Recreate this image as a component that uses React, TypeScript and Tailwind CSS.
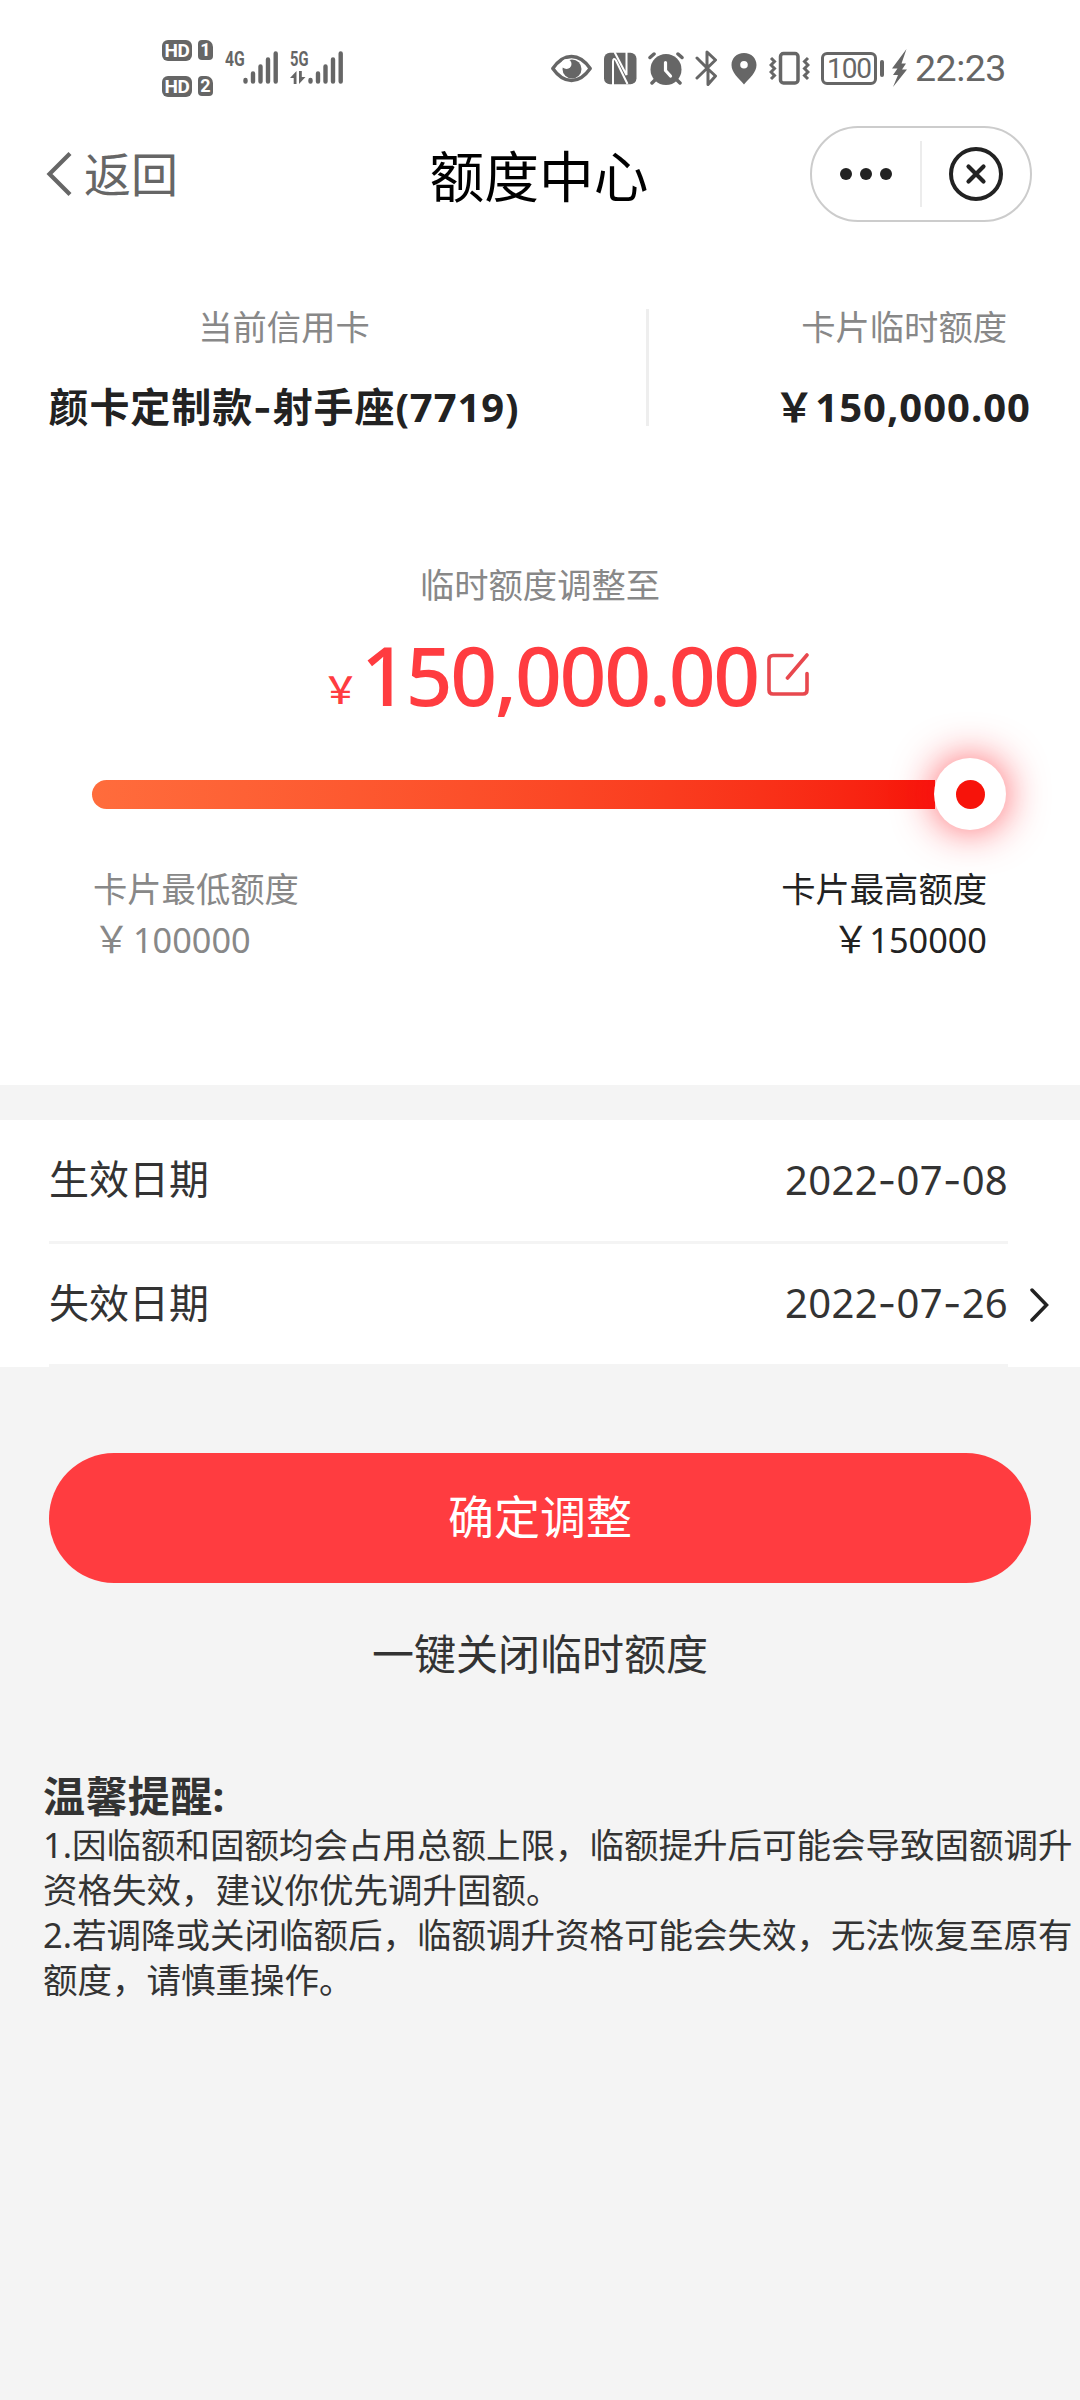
import { Fragment } from "react";

const dates = [
  { label: "生效日期", value: "2022-07-08", editable: false },
  { label: "失效日期", value: "2022-07-26", editable: true },
];

const notices = [
  "1.因临额和固额均会占用总额上限，临额提升后可能会导致固额调升资格失效，建议你优先调升固额。",
  "2.若调降或关闭临额后，临额调升资格可能会失效，无法恢复至原有额度，请慎重操作。",
];

const HdBadge = ({ sim }: { sim: string }) => (
  <div className="flex gap-[6px]">
    <span className="flex h-[21px] w-[30px] items-center justify-center rounded-[6px] bg-[#666] font-['Roboto'] text-[19px] leading-none font-bold tracking-[-0.5px] text-white">
      HD
    </span>
    <span className="flex h-[20px] w-[15px] items-center justify-center rounded-[4px] rounded-tr-[7px] bg-[#666] font-['Roboto'] text-[18px] leading-none font-bold text-white">
      {sim}
    </span>
  </div>
);

const SignalBars = () => (
  <svg width="36" height="36" viewBox="0 0 36 36" stroke="#666" strokeWidth="4.4" strokeLinecap="round">
    <path d="M2.5 30v1.6M10 23.5v8.1M17.5 16.5v15.1M25 9.5v22.1M32.7 3.5v28.1" />
  </svg>
);

const StatusBar = () => (
  <div className="flex h-[120px] items-center pt-[16px] pl-[162px] text-[#666]">
    <div className="flex flex-col gap-[15px]">
      <HdBadge sim="1" />
      <HdBadge sim="2" />
    </div>
    <div className="ml-[12px] flex h-[36px] w-[18px] items-start">
      <span className="origin-left scale-x-[0.75] font-['Roboto'] text-[21px] leading-[18px] font-bold">4G</span>
    </div>
    <SignalBars />
    <div className="ml-[11px] flex h-[36px] w-[18px] flex-col">
      <span className="origin-left scale-x-[0.7] font-['Roboto'] text-[21px] leading-[18px] font-bold">5G</span>
      <svg className="mt-[3px]" width="16" height="13" viewBox="0 0 16 13">
        <path d="M6.500 13V0L0 7h3.700v6zM9 0v13l6.500-7h-3.700V0z" fill="#666" />
      </svg>
    </div>
    <SignalBars />

    {/* eye */}
    <svg className="ml-[207px]" width="41" height="36" viewBox="0 0 41 36">
      <path
        d="M1.800 18.500C7 11 13 6.500 20.500 6.500S34 11 39.200 18.500C34 26 28 30.500 20.500 30.500S7 26 1.800 18.500z"
        fill="none"
        stroke="#666"
        strokeWidth="3.400"
        strokeLinejoin="round"
      />
      <circle cx="21" cy="19" r="9.500" fill="#666" />
      <circle cx="15.500" cy="14" r="5" fill="#fff" />
    </svg>
    {/* nfc */}
    <svg className="ml-[12px]" width="33" height="36" viewBox="0 0 33 36">
      <rect y="2.700" width="32.500" height="31.600" rx="6" fill="#666" />
      <path d="M9 35V11.500c0-3 1.500-3.500 3-1L23.500 34M10.500 2 22.500 25V2" fill="none" stroke="#fff" strokeWidth="2" />
    </svg>
    {/* alarm */}
    <svg className="ml-[11px]" width="36" height="36" viewBox="0 0 36 36" fill="none" strokeLinecap="round">
      <circle cx="18" cy="19.500" r="15.500" fill="#666" />
      <path d="M2 7.500 6 4M34 7.500 30 4M7 30l-3 3M29 30l3 3" stroke="#666" strokeWidth="3.500" />
      <path d="M17.500 12.500v8l5 5.500" stroke="#fff" strokeWidth="3.200" />
    </svg>
    {/* bluetooth */}
    <svg className="ml-[11px]" width="23" height="38" viewBox="0 0 23 38" fill="none" stroke="#666" strokeWidth="3" strokeLinecap="round" strokeLinejoin="round">
      <path d="M2 9l9.500 9.500M2 29 20.500 11 12 3v15.500M13 21v14.500l7.500-8.500L13 20" />
    </svg>
    {/* location */}
    <svg className="ml-[13px]" width="26" height="36" viewBox="0 0 26 36">
      <path
        fillRule="evenodd"
        fill="#666"
        d="M13 3C5.500 3 .5 8.500.5 15c0 7.500 7 13 12.500 19.500C18.500 28 25.500 22.500 25.500 15 25.500 8.500 20.500 3 13 3zm0 8a3.800 3.800 0 1 1 0 7.600 3.800 3.800 0 0 1 0-7.600z"
      />
    </svg>
    {/* vibrate */}
    <svg className="ml-[12px]" width="41" height="36" viewBox="0 0 41 36" fill="none" stroke="#666" strokeWidth="3">
      <rect x="11.500" y="3.500" width="17.500" height="29.500" rx="3" strokeWidth="3.500" />
      <path d="M2 8l3.500 3.500L2 15l3.500 3.500L2 22l3.500 3.500L2 29M39 8l-3.500 3.500L39 15l-3.500 3.500L39 22l-3.500 3.500L39 29" />
    </svg>
    {/* battery */}
    <div className="ml-[11px] flex items-center gap-[3px]">
      <span className="flex h-[33px] w-[56px] items-center justify-center rounded-[6px] border-[3px] border-[#666] pt-[2px] font-['Roboto'] text-[28px] leading-none tracking-[-1px]">
        100
      </span>
      <span className="h-[17px] w-[4px] rounded-full bg-[#666]" />
    </div>
    <svg className="ml-[8px]" width="15" height="38" viewBox="0 0 15 38">
      <path d="M14.500 0 0 19.500h5.500L1 26h5L1 38l14-17.500h-5l4-6H9.500z" fill="#666" />
    </svg>
    <span className="ml-[8px] pt-[2px] font-['Roboto'] text-[37.500px] leading-none tracking-[-0.500px]">22:23</span>
  </div>
);

const Header = () => (
  <div className="grid h-[108px] grid-cols-3 items-center pr-[48px] pl-[46px]">
    <button className="flex items-center gap-[12px] text-[47px] leading-none text-[#666]">
      <svg width="26" height="44" viewBox="0 0 26 44" fill="none" stroke="#666" strokeWidth="4.200">
        <path d="M24 1.500 3.500 22 24 42.500" />
      </svg>
      返回
    </button>
    <h1 className="pt-[4px] text-center text-[54.700px] leading-none text-black">额度中心</h1>
    <div className="flex h-[96px] w-[222px] items-center justify-self-end rounded-full border-2 border-[#ccc]">
      <div className="flex flex-1 justify-center gap-[8px]">
        <span className="size-[12px] rounded-full bg-[#222]" />
        <span className="size-[12px] rounded-full bg-[#222]" />
        <span className="size-[12px] rounded-full bg-[#222]" />
      </div>
      <span className="h-[66px] w-[2px] bg-[#ececec]" />
      <div className="flex flex-1 justify-center">
        <svg width="54" height="54" viewBox="0 0 54 54" fill="none" stroke="#222">
          <circle cx="27" cy="27" r="25" strokeWidth="4" />
          <path d="M19.500 19.500l15 15M34.500 19.500l-15 15" strokeWidth="4.200" strokeLinecap="round" />
        </svg>
      </div>
    </div>
  </div>
);

// Hyphens use a wider face than the digits
const DateText = ({ value }: { value: string }) => (
  <span className="tracking-[0.300px]">
    {value.split("-").map((part, i) => (
      <Fragment key={i}>
        {i > 0 && <span className="font-['Inter']">-</span>}
        {part}
      </Fragment>
    ))}
  </span>
);

const App = () => {
  return (
    <div className="h-[2400px] w-[1080px] overflow-hidden bg-[#f4f4f4] font-['Noto_Sans','Noto_Sans_CJK_SC',sans-serif] text-[#333]">
      <div className="h-[1085px] bg-white">
        <StatusBar />
        <Header />

        {/* Card summary */}
        <div className="flex h-[200px] items-start pt-[72px]">
          <div className="flex w-[568px] flex-col items-center pt-[2px]">
            <span className="text-[34.300px] leading-[50px] text-[#888]">当前信用卡</span>
            <span className="mt-[25px] text-[40px] leading-[60px] font-bold tracking-[0.900px] whitespace-nowrap text-[#222]">
              颜卡定制款<span className="font-['Inter']">-</span>射手座(7719)
            </span>
          </div>
          <span className="mt-[9px] ml-[78px] h-[117px] w-[3px] bg-[#eee]" />
          <div className="ml-auto flex flex-col items-end pt-[2px] pr-[49px]">
            <span className="pr-[24px] text-[34.300px] leading-[50px] text-[#888]">卡片临时额度</span>
            <span className="mt-[25px] text-[40px] leading-[60px] font-bold tracking-[1px] text-[#222]">
              ￥150,000.00
            </span>
          </div>
        </div>

        {/* Amount */}
        <div className="flex flex-col items-center pt-[132px]">
          <span className="text-[34.300px] leading-[50px] text-[#888]">临时额度调整至</span>
          <div className="mt-[9px] ml-[51px] flex h-[110px] items-center text-[#ff3c40]">
            <span className="pt-[30px] text-[37px] leading-none font-medium">￥</span>
            <span className="ml-[2px] text-[82px] leading-none font-medium tracking-[-2.300px]">150,000.00</span>
            <svg className="ml-[9px] mt-[2px]" width="42" height="44" viewBox="0 0 42 44" fill="none" stroke="#e8484e" strokeWidth="3.600" strokeLinecap="round">
              <path d="M25 2.500H6q-4 0-4 4V37q0 4 4 4h30q4 0 4-4V20.500M40 2 20.500 25" />
            </svg>
          </div>
        </div>

        {/* Slider */}
        <div className="mt-[29px] ml-[92px] flex h-[72px] w-[914px] items-center">
          <div className="h-[29px] flex-1 rounded-l-full bg-linear-to-r from-[#ff6c3c] to-[#f7130a]" />
          <div className="ml-[-1px] flex size-[72px] items-center justify-center rounded-full bg-white shadow-[0_0_40px_rgba(255,20,30,0.7)]">
            <span className="size-[29px] rounded-full bg-[#f7130a]" />
          </div>
        </div>

        <div className="mt-[33px] flex justify-between pr-[93px] pl-[93px] text-[34.300px] leading-[51px]">
          <div className="flex flex-col text-[#888]">
            <span>卡片最低额度</span>
            <span>
              <span className="mr-[3px] text-[37px] leading-none">￥</span>100000
            </span>
          </div>
          <div className="flex flex-col items-end text-[#222]">
            <span>卡片最高额度</span>
            <span>
              <span className="text-[37px] leading-none">￥</span>150000
            </span>
          </div>
        </div>
      </div>

      {/* Dates */}
      <div className="mt-[35px] bg-white pl-[49px]">
        {dates.map((item) => (
          <div key={item.label} className="flex items-center">
            <div className="flex h-[123.500px] w-[959px] items-center justify-between border-b-[3px] border-[#f4f4f4] text-[40px] leading-[60px]">
              <span className="pb-[2px]">{item.label}</span>
              <DateText value={item.value} />
            </div>
            {item.editable && (
              <svg className="ml-[22px]" width="19" height="34" viewBox="0 0 19 34" fill="none" stroke="#222" strokeWidth="3.500" strokeLinecap="round">
                <path d="M2 2l14.500 15L2 32" />
              </svg>
            )}
          </div>
        ))}
      </div>

      {/* Actions */}
      <div className="flex flex-col px-[49px] pt-[86px]">
        <button className="h-[130px] rounded-full bg-[#ff3c40] pb-[4px] text-[46px] leading-none text-white">确定调整</button>
        <button className="mt-[40px] text-[42px] leading-[62px]">一键关闭临时额度</button>
      </div>

      <div className="mt-[82px] w-[1036px] pl-[43px] text-[34.500px] leading-[45px]">
        <h2 className="h-[55px] text-[42px] leading-[57px] font-bold tracking-[0.400px]">温馨提醒:</h2>
        {notices.map((text) => (
          <p key={text} className="w-[1034px]">
            {text}
          </p>
        ))}
      </div>
    </div>
  );
};

export default App;
